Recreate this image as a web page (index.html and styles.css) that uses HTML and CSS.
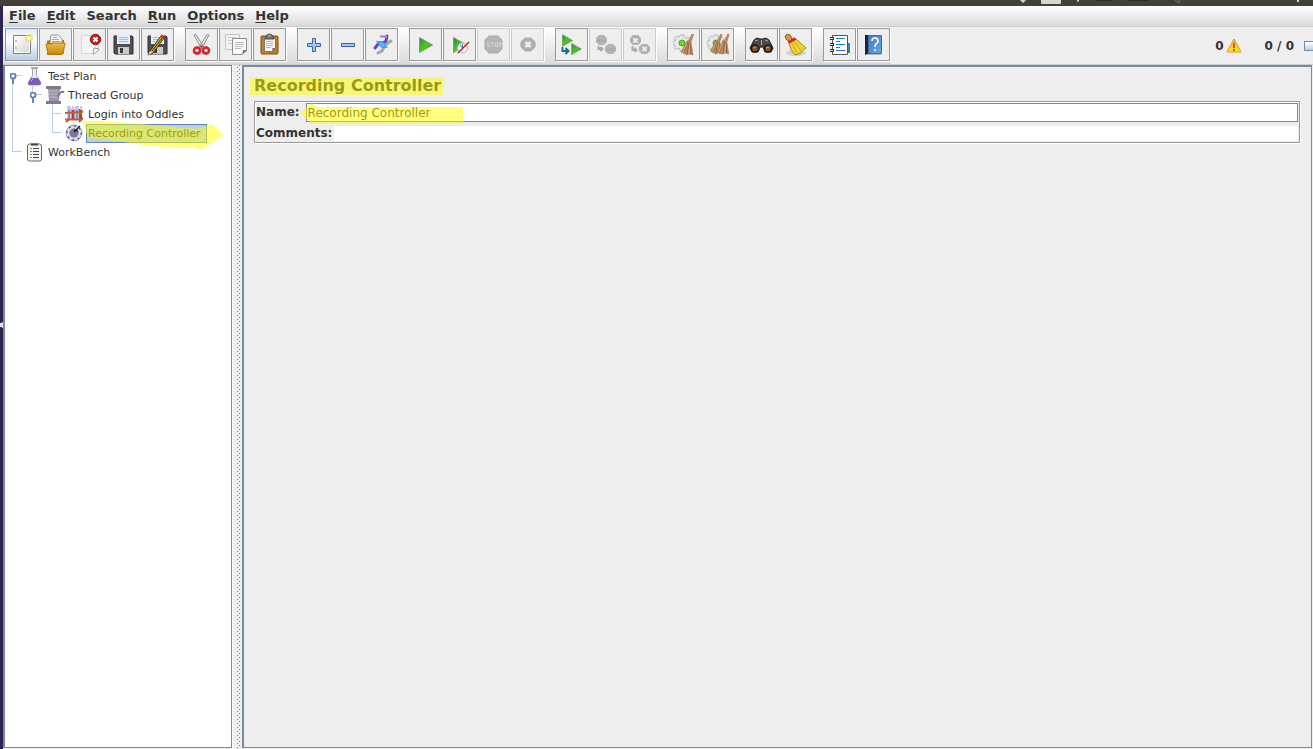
FILE: index.html
```html
<!DOCTYPE html>
<html lang="en">
<head>
<meta charset="utf-8">
<title>Test Plan</title>
<link rel="stylesheet" href="styles.css">
</head>
<body>
<svg class="defs" aria-hidden="true">
  <defs>
    <linearGradient id="green" x1="0" y1="0" x2="1" y2="1"><stop offset="0" stop-color="#2f7f4a"/><stop offset=".5" stop-color="#4fc81c"/><stop offset="1" stop-color="#2f8a12"/></linearGradient>
    <linearGradient id="folder" x1="0" y1="0" x2="0" y2="1"><stop offset="0" stop-color="#efbc43"/><stop offset="1" stop-color="#c98a0c"/></linearGradient>
    <linearGradient id="paper" x1="0" y1="0" x2="1" y2="1"><stop offset="0" stop-color="#ffffff"/><stop offset="1" stop-color="#d4d4d4"/></linearGradient>
    <linearGradient id="book" x1="0" y1="0" x2="1" y2="1"><stop offset="0" stop-color="#3f7cc8"/><stop offset="1" stop-color="#6aa5ea"/></linearGradient>
    <linearGradient id="warn" x1="0" y1="0" x2="0" y2="1"><stop offset="0" stop-color="#f7a84a"/><stop offset="1" stop-color="#fff200"/></linearGradient>
    <symbol id="floppy" viewBox="0 0 25 25">
      <path d="M3 4h18l1 1v17H4l-1-1z" fill="#4c5055" stroke="#2c2f33"/>
      <path d="M6 3h13v9H6z" fill="#e4eefa"/><path d="M8 5.500h9M8 7.500h9M8 9.500h9" stroke="#9dbbdc"/>
      <path d="M7 15h11v7H7z" fill="#c9c9c9"/><path d="M9 16h3v5H9z" fill="#383b3f"/>
    </symbol>
    <symbol id="play" viewBox="0 0 14 16"><path d="M.5.5l13 7.500-13 7.500z" fill="url(#green)" stroke="#7d9a72"/></symbol>
    <symbol id="broom" viewBox="0 0 14 22">
      <path d="M12 0l1.500.5L11 8l2 13-4-1-2 1-6-3 6-11 2-1z" fill="#b98d62" stroke="#a0764e" stroke-width=".6"/>
      <path d="M8 8L4 18M9 9L7 20M10 9l1 11" stroke="#7f5632" stroke-width=".8"/><path d="M7 9l-4 9M9.500 10L9 20" stroke="#dab68c" stroke-width=".8"/>
    </symbol>
    <symbol id="gear" viewBox="0 0 18 18">
      <path d="M7 1h4v2.500l2 .8 2-1.500 2 2-1.500 2 .8 1.200H18v4h-2l-.8 2 1.500 2-2 2-2-1.500-2 .8V17H7v-2l-2-.8-2 1.500-2-2L2.500 12 2 11H0V7h2l.8-1L1.500 4l2-2 2 1.500z" fill="#e5e9ea" stroke="#b2babc"/>
      <circle cx="9" cy="9" r="3" fill="#72d52c" stroke="#4ba51b"/>
    </symbol>
  </defs>
</svg>
<div class="app">
  <div class="topbar"><svg width="300" height="6" viewBox="0 0 300 6" aria-hidden="true"><path d="M9 0h6l-3 3zM66 0h2v1l-2 1zM286 0h2v2h-2z" fill="#d8d5cf"/><path d="M30 0h20v3q0 1-1 1H31q-1 0-1-1z" fill="#d8d5cf"/><path d="M85 0h17M117 0h20" stroke="#2c2b27" stroke-width="2"/><path d="M164 0l4 3 1-3" stroke="#77756e" fill="none"/></svg></div>
  <nav class="menubar" aria-label="Main menu">
    <button class="menu"><u>F</u>ile</button><button class="menu"><u>E</u>dit</button><button class="menu">Search</button><button class="menu"><u>R</u>un</button><button class="menu"><u>O</u>ptions</button><button class="menu"><u>H</u>elp</button>
  </nav>
  <header class="toolbar">
    <div class="group">
      <button class="tool hot" aria-label="New"><svg viewBox="0 0 25 25"><path d="M4.500 3.500h17v18h-17z" fill="url(#paper)" stroke="#7f7f7f"/><path d="M5.500 4.500h15v16h-15z" fill="none" stroke="#fff"/><path d="M7 8v2M7 15v2" stroke="#888"/><circle cx="20" cy="6" r="4" fill="#f0e050" opacity=".75"/><circle cx="20" cy="6" r="2" fill="#fffbd5"/></svg></button>
      <button class="tool" aria-label="Open"><svg viewBox="0 0 25 25"><path d="M4 9l3-1h14v13l-3 2H4z" fill="#b47a10"/><path d="M7 11l1-8h7l4 4v5z" fill="#f7f7f7" stroke="#999"/><path d="M10 5.500h4M9 7.500h7M9 9.500h8" stroke="#a8a8a8"/><path d="M3 12h5l2-1h12l-2 11H5z" fill="url(#folder)" stroke="#b37b0c"/></svg></button>
      <button class="tool" aria-label="Close"><svg viewBox="0 0 25 25"><path d="M4.500 3.500h17v13l-5 5h-12z" fill="#f6f6f6" stroke="#d6d6d6"/><path d="M16 22l1-6 5 1q-2 4-6 5z" fill="#fff" stroke="#999"/><circle cx="18.500" cy="7.500" r="5.200" fill="#c3231c" stroke="#8f1510"/><path d="M16.500 5.500l4 4m0-4l-4 4" stroke="#fff" stroke-width="2"/></svg></button>
      <button class="tool" aria-label="Save"><svg viewBox="0 0 25 25"><use href="#floppy"/></svg></button>
      <button class="tool" aria-label="Save as"><svg viewBox="0 0 25 25"><use href="#floppy"/><path d="M5 19L16 4l3 2L8 21l-5 2z" fill="#e7b42c" stroke="#3c2b08"/><path d="M7 19L17 6" stroke="#2a241a"/><path d="M15.500 4.500l1.500-2 3 2-1.500 2.500z" fill="#d3241d"/><path d="M5 19l-2 4 4-2z" fill="#f6e2b0"/></svg></button>
    </div>
    <div class="group">
      <button class="tool" aria-label="Cut"><svg viewBox="0 0 25 25"><ellipse cx="12" cy="21" rx="8" ry="2" fill="#ccc"/><path d="M5 3l2-.5 8 13-2 2zM20 3l-2-.5-8 13 2 2z" fill="#e4e6e3" stroke="#8d908c"/><circle cx="8" cy="18.500" r="3" fill="none" stroke="#d91e26" stroke-width="2.500"/><circle cx="17" cy="18.500" r="3" fill="none" stroke="#d91e26" stroke-width="2.500"/><circle cx="12.500" cy="14.500" r="1" fill="#6d1b1b"/></svg></button>
      <button class="tool" aria-label="Copy"><svg viewBox="0 0 25 25"><path d="M2.500 2.500h14v15h-14z" fill="#f2f2f2" stroke="#c2c2c2"/><path d="M5 5.500h8M5 8.500h4M5 11.500h4" stroke="#cbcbcb"/><path d="M9.500 6.500h14v12l-4 4h-10z" fill="#fafafa" stroke="#8d8d8d"/><path d="M12 10.500h9M12 12.500h9M12 14.500h8M12 16.500h6" stroke="#bcbcbc"/><path d="M19 22l1-4 4 0z" fill="#777"/></svg></button>
      <button class="tool" aria-label="Paste"><svg viewBox="0 0 25 25"><rect x="4" y="4" width="17" height="18" rx="1" fill="#bb8025" stroke="#805006"/><path d="M7.500 6.500h11v10l-3 3h-8z" fill="#f5f5f5" stroke="#777"/><path d="M9 9.500h7M9 11.500h7M9 13.500h7M9 15.500h5" stroke="#b5b5b5"/><path d="M15 20l.5-4h3.500z" fill="#777"/><path d="M8 7l1-3q3-4 7 0l1 3z" fill="#6c706a" stroke="#4c504c"/><path d="M11 4h3" stroke="#c7cac4"/></svg></button>
    </div>
    <div class="group">
      <button class="tool" aria-label="Expand all"><svg viewBox="0 0 25 25"><path d="M11.500 6.500h3v5h5v3h-5v5h-3v-5h-5v-3h5z" fill="#a6c7ec" stroke="#3465a4"/></svg></button>
      <button class="tool" aria-label="Collapse all"><svg viewBox="0 0 25 25"><path d="M6.500 11.500h13v3h-13z" fill="#a6c7ec" stroke="#3465a4"/></svg></button>
      <button class="tool" aria-label="Toggle"><svg viewBox="0 0 25 25"><path d="M22 9l-6 4-3 6-4 2" stroke="#a5a5a5" stroke-width="3" stroke-linecap="round" fill="none"/><path d="M18 4l-1 5-3 2M10 11l-4 5" stroke="#713ecb" stroke-width="3" stroke-linecap="round" fill="none"/><path d="M12 4.500h5" stroke="#a88bdf" stroke-width="2.500" stroke-linecap="round"/><path d="M9 10h4l4 5h-4z" fill="#71d5ff" stroke="#3ba8f5" stroke-width="2"/></svg></button>
    </div>
    <div class="group">
      <button class="tool" aria-label="Start"><svg viewBox="0 0 25 25"><use href="#play" x="6" y="5" width="14" height="16"/></svg></button>
      <button class="tool" aria-label="Start no pauses"><svg viewBox="0 0 25 25"><use href="#play" x="6" y="5" width="14" height="16"/><circle cx="15.500" cy="16" r="5" fill="#eaf2fa" stroke="#9bb7d2"/><path d="M13 13l2.500 3v-4" stroke="#567ca5" fill="none"/><path d="M11 21L22 10" stroke="#cf1515" stroke-width="1.500"/></svg></button>
      <button class="tool off" disabled aria-label="Stop"><svg viewBox="0 0 25 25"><path d="M8 4h9l4 4v9l-4 4H8l-4-4V8z" fill="#b5b5b5" stroke="#aaa"/><path d="M8.500 10.500h-2v2h2v2h-2M10 10.500h3M11.500 10v5M14.500 10.500h2v4h-2zM18.500 15v-4.500h1.500v2h-1" stroke="#d0d0d0" fill="none"/></svg></button>
      <button class="tool off" disabled aria-label="Shutdown"><svg viewBox="0 0 25 25"><path d="M10 6h6l4 4v5l-4 4h-6l-4-4v-5z" fill="#b0b0b0" stroke="#aaa"/><path d="M10.500 10l5 5m0-5l-5 5" stroke="#eee" stroke-width="2.500"/></svg></button>
    </div>
    <div class="group">
      <button class="tool" aria-label="Remote start all"><svg viewBox="0 0 25 25"><use href="#play" x="3" y="2" width="11" height="13"/><use href="#play" x="12" y="11" width="11" height="12"/><path d="M3.500 15v4h5m-2-3l3 3-3 3" stroke="#15728a" stroke-width="2" fill="none"/></svg></button>
      <button class="tool off" disabled aria-label="Remote stop all"><svg viewBox="0 0 25 25"><g fill="#b4b4b4"><path d="M6 3h5l3 3v4l-3 3H6l-3-3V6zM15 12h5l3 3v4l-3 3h-5l-3-3v-4z"/></g><path d="M5 8.500h7M14 17.500h7" stroke="#a2a2a2" stroke-width="2" stroke-dasharray="2 1"/><path d="M5.500 14v3h4m-2-2l2 2-2 2" stroke="#aaa" stroke-width="2" fill="none"/></svg></button>
      <button class="tool off" disabled aria-label="Remote shutdown all"><svg viewBox="0 0 25 25"><path d="M6 3h5l3 3v4l-3 3H6l-3-3V6zM15 12h5l3 3v4l-3 3h-5l-3-3v-4z" fill="#b0b0b0"/><path d="M6.500 6.500l4 4m0-4l-4 4M15.500 15l4 4m0-4l-4 4" stroke="#eee" stroke-width="1.800"/><path d="M5.500 14v4h4m-2-2l2 2-2 2" stroke="#aaa" stroke-width="2" fill="none"/></svg></button>
    </div>
    <div class="group">
      <button class="tool" aria-label="Clear"><svg viewBox="0 0 25 25"><use href="#gear" x="2" y="2" width="18" height="18"/><use href="#broom" x="9" y="2" width="14" height="22"/></svg></button>
      <button class="tool" aria-label="Clear all"><svg viewBox="0 0 25 25"><use href="#gear" x="2" y="2" width="18" height="18"/><use href="#broom" x="4" y="2" width="14" height="21"/><use href="#broom" x="11" y="2" width="14" height="21"/></svg></button>
    </div>
    <div class="group">
      <button class="tool" aria-label="Search"><svg viewBox="0 0 25 25"><path d="M5 8l3-2 3 1h3l3-1 3 2 4 8-2 4h-6l-2-5h-3l-2 5H3l-2-4z" fill="#494949" stroke="#202020"/><path d="M6 9l3-1M16 8l3 1M12.500 8v5" stroke="#aaa"/><circle cx="6" cy="16.500" r="3.600" fill="#8e5127" stroke="#171717" stroke-width="1.500"/><circle cx="19" cy="16.500" r="3.600" fill="#8e5127" stroke="#171717" stroke-width="1.500"/><path d="M4 16l3-1M17 16l3-1" stroke="#d39664"/></svg></button>
      <button class="tool" aria-label="Reset search"><svg viewBox="0 0 25 25"><ellipse cx="13" cy="21" rx="10" ry="3" fill="#d0d0d0"/><path d="M2 4q2-3 5-1l3 5-4 2-3-3z" fill="#d69847" stroke="#945e18"/><path d="M6 11l7-4 10 9q-4 2-5 5l-6 2q-5-5-6-12z" fill="#ecd438" stroke="#a98d08"/><path d="M9 12l5 9M12 10l6 9" stroke="#c8aa1c"/><path d="M5.500 10.500l7-4" stroke="#d72323" stroke-width="3"/></svg></button>
    </div>
    <div class="group">
      <button class="tool" aria-label="Function helper"><svg viewBox="0 0 25 25"><path d="M19 11h4v6h-4z" fill="#2b86e8"/><path d="M19 17h4v4h-4z" fill="#2b9a25"/><path d="M5.500 3.500h15v19h-15z" fill="#fdfdfd" stroke="#555"/><path d="M3 6.500h4M3 12.500h4M3 18.500h4" stroke="#333" stroke-width="3"/><path d="M2 6.500h4M2 12.500h4M2 18.500h4" stroke="#ddd"/><path d="M9 6.500h9M9 9.500h4M9 12.500h9M9 15.500h4M9 18.500h9" stroke="#1a75df"/></svg></button>
      <button class="tool" aria-label="Help"><svg viewBox="0 0 25 25"><path d="M4 3h4v20H4z" fill="#20262e"/><path d="M7.500 3.500h13v18h-13z" fill="url(#book)" stroke="#386fb0"/><path d="M5 22.500h15" stroke="#b8b8b8"/><path d="M11 9q0-3 3-3t3 3q0 2-2 3-1 1-1 3M14 17v2" stroke="#fff" stroke-width="1.700" fill="none"/></svg></button>
    </div>
    <div class="status">
      <span>0</span>
      <svg class="warning" viewBox="0 0 16 15" role="img" aria-label="Warnings"><path d="M8 1l7 13H1z" fill="url(#warn)" stroke="#ee8a28" stroke-linejoin="round"/><path d="M8 5v5M8 11v2" stroke="#d05a1a" stroke-width="2"/></svg>
      <span class="threads">0 / 0</span>
      <span class="lamp"></span>
    </div>
  </header>
  <main class="workspace">
    <aside class="treepane">
      <ul class="tree">
        <li class="node first">
          <div class="row"><button class="handle" aria-label="Collapse Test Plan"></button><svg class="icon" viewBox="0 0 20 20"><path d="M8.500 2.500v7L4 17q0 2 2 2h9q2 0 2-2l-4.500-7.500v-7" fill="#eceaf2" stroke="#a6a4b0"/><path d="M7 12h7l3 5q0 2-2 2H6q-2 0-2-2z" fill="#7f5db8"/><path d="M7 2h7" stroke="#aaa" stroke-width="2"/><path d="M7 15l2-2" stroke="#c5b3e6"/></svg><span class="label">Test Plan</span></div>
          <ul>
            <li class="node last">
              <div class="row"><button class="handle" aria-label="Collapse Thread Group"></button><svg class="icon" viewBox="0 0 20 20"><path d="M4 3h12l-1 13H5z" fill="#9c94a8"/><path d="M2 2.500h15M2 17.500h15" stroke="#817a8d" stroke-width="3"/><path d="M5 6h9M5 9h9M6 12h8" stroke="#c0b9cb"/><path d="M14 12q2-6 6-5" stroke="#82798f" stroke-width="2" fill="none"/></svg><span class="label">Thread Group</span></div>
              <ul>
                <li class="node">
                  <div class="row"><span></span><svg class="icon" viewBox="0 0 20 20"><path d="M5 2v14M13 2v14" stroke="#8a8fd8" stroke-width="3"/><path d="M9 5v11M16.500 5v10" stroke="#c62b4b" stroke-width="3"/><path d="M5 2v4M9 2v4M13 2v4M17 2v4" stroke="#c5c9dc" stroke-width="2"/><path d="M1 9l17-1M1 15.500h17M2 18l4-3M15 11l4-4M15 18l4-4" stroke="#b5652c" stroke-width="1.800"/></svg><span class="label">Login into Oddles</span></div>
                </li>
                <li class="node last">
                  <div class="row"><span></span><svg class="icon" viewBox="0 0 20 20"><circle cx="10" cy="10" r="8" fill="#dcd9e5" stroke="#a39fb4"/><circle cx="10" cy="10" r="7" fill="none" stroke="#494158" stroke-width="1.500" stroke-dasharray="1.500 4"/><circle cx="10" cy="10" r="4.500" fill="#7f739d"/><path d="M10 9l6-6M10 7l4 1" stroke="#282333" stroke-width="1.500"/></svg><span class="label selected">Recording Controller</span>
                  <svg class="marker" viewBox="0 0 142 32" aria-hidden="true"><path d="M1 1L20 1 60 4 115 9 130 4 142 15 119 30 114 28 95 28 61 25 35 21 6 18z"/></svg></div>
                </li>
              </ul>
            </li>
          </ul>
        </li>
        <li class="node last">
          <div class="row"><span></span><svg class="icon" viewBox="0 0 20 20"><rect x="3.500" y="2" width="14" height="17" rx="2" fill="#f4f4f4" stroke="#666"/><path d="M7 2.500h7" stroke="#444" stroke-width="2"/><path d="M9 6.500h6M9 9.500h6M9 12.500h6M9 15.500h6" stroke="#444"/><path d="M6 6.500h2M6 9.500h2M6 12.500h2M6 15.500h2" stroke="#679a52"/></svg><span class="label">WorkBench</span></div>
        </li>
      </ul>
    </aside>
    <div class="splitter" role="separator"></div>
    <section class="editor">
      <h1 class="title">Recording Controller</h1>
      <form class="fields">
        <div class="field"><label for="name">Name:</label><input class="text boxed" id="name" type="text" value="Recording Controller"><svg class="namemark" viewBox="0 0 163 22" aria-hidden="true"><path d="M0 10L12 0 17 4H163V21H12z"/></svg></div>
        <div class="field"><label for="comments">Comments:</label><input class="text" id="comments" type="text"></div>
      </form>
    </section>
  </main>
  <svg class="launcher" viewBox="0 0 3 6" aria-hidden="true"><path d="M0 1h1l2-1v6l-2-1H0z" fill="#e4e2e8"/></svg>
</div>
</body>
</html>
```
FILE: styles.css
```css
* { box-sizing: border-box; }
body { margin: 0; font-family: "DejaVu Sans", sans-serif; color: #333; background: #eee; overflow: hidden; }
button, input { font: inherit; color: inherit; }
.defs { position: absolute; width: 0; height: 0; }
.app { position: relative; display: flex; flex-direction: column; height: 100vh; border-left: 3px solid #2b2350; }
.launcher { position: absolute; left: -3px; top: 43%; width: 3px; height: 6px; }
.topbar { height: 6px; flex: none; display: flex; justify-content: flex-end; background: #42403b; overflow: hidden; margin-left: -3px; padding-right: 2px; }

.menubar { flex: none; display: flex; gap: 11px; height: 21px; padding-left: 6px; align-items: center; background: linear-gradient(#fff, #dadada); border-bottom: 1px solid #ccc; }
.menu { border: 0; padding: 0; background: none; font-size: 13px; line-height: 16px; font-weight: bold; }
.menu u { text-underline-offset: 2px; }

.toolbar { flex: none; display: flex; align-items: flex-start; gap: 11px; height: 38px; padding: 1px 0 0 2px; background: linear-gradient(#fff, #dadada); border-bottom: 1px solid #ccc; }
.group { display: flex; gap: 1px; }
.tool { width: 33px; height: 33px; padding: 3px; border: 1px solid #999; outline: 0; box-shadow: 1px 1px #fff; background: #eee; }
.tool svg { display: block; width: 25px; height: 25px; }
.tool.hot { background: linear-gradient(#dfe9f4, #fff 35%, #b8cfe5); border-color: #8397ad; }
.tool.off { border-color: #ccc; }
.status { flex: 1; align-self: stretch; display: flex; justify-content: flex-end; align-items: center; margin: -1px 0 0 -10px; background: #eee; font-size: 12px; font-weight: bold; line-height: 16px; }
.warning { width: 16px; height: 15px; margin-left: 2px; }
.threads { margin: 0 10px 0 23px; }
.lamp { width: 9px; height: 10px; border: 1px solid #7a8a99; border-right: 0; background: linear-gradient(#fff, #b8cfe5); }

.workspace { flex: 1; min-height: 0; display: grid; grid-template-columns: 229px 10px 1fr; padding-bottom: 1px; }
.treepane { background: #fff; border: solid #7a8a99; border-width: 1px 1px 1px 2px; overflow: hidden; }
.tree, .tree ul { list-style: none; margin: 0; padding: 0; }
.tree ul { padding-left: 20px; }
.node { position: relative; }
.node::before { content: ""; position: absolute; left: 7px; top: 9px; width: 10px; border-top: 1px solid #b8cfe5; }
.node::after { content: ""; position: absolute; left: 7px; top: 0; bottom: 0; border-left: 1px solid #b8cfe5; }
.node.first::after { top: 9px; }
.node.last::after { bottom: auto; height: 9px; }
.row { position: relative; display: grid; grid-template-columns: 19px 20px auto; align-items: center; justify-content: start; height: 19px; }
.icon { width: 20px; height: 20px; }
.handle { position: relative; z-index: 1; width: 7px; height: 11px; margin: 5px 0 0 5px; padding: 0; border: 0; background: radial-gradient(circle at 3px 3px, #fff 1px, #6382bf 2px, #6382bf 3px, transparent 4px), linear-gradient(#6382bf, #6382bf) 2px 5px / 2px 6px no-repeat; }
.label { margin-left: 2px; padding: 0 2px 0 1px; border: 1px solid transparent; font-size: 11px; line-height: 17px; white-space: nowrap; }
.label.selected { padding-right: 5px; background: #b8cfe5; border-color: #6382bf; }
.marker { position: absolute; left: 37px; top: -3px; width: 142px; height: 32px; fill: #ff0; opacity: .5; pointer-events: none; }

.splitter { cursor: col-resize; background:
  linear-gradient(#fff, #fff) 0 0 / 1px 100% no-repeat,
  repeating-linear-gradient(#777d84 0 1px, transparent 1px 4px) 5px 2px / 1px 100% no-repeat,
  repeating-linear-gradient(#777d84 0 1px, transparent 1px 4px) 7px 0 / 1px 100% no-repeat,
  repeating-linear-gradient(#fff 0 1px, transparent 1px 4px) 4px 1px / 1px 100% no-repeat,
  repeating-linear-gradient(#fff 0 1px, transparent 1px 4px) 6px 3px / 1px 100% no-repeat, #eee; }

.editor { border: solid #7a8a99; border-width: 2px 1px 1px 2px; margin-right: 1px; padding: 10px 11px 0 10px; min-width: 0; }
.title { position: relative; width: max-content; margin: 0 0 6px; font-size: 16px; line-height: 18px; font-weight: bold; }
.title::after { content: ""; position: absolute; inset: 0 -2px 0 -4px; background: #ff0; opacity: .5; }
.fields { border: 1px solid #999; box-shadow: 1px 1px #fff, inset 1px 1px #fff; padding: 1px; display: grid; gap: 4px; font-size: 12px; }
.field { position: relative; display: flex; align-items: stretch; }
.field label { padding-right: 6px; font-weight: bold; line-height: 15px; align-self: center; }
.field + .field label { padding-right: 2px; }
.text { flex: 1; min-width: 0; border: 0; padding: 0 1px; height: 15px; outline: 0; background: #fff; font-size: 12px; }
.text.boxed { height: 19px; border: 1px solid #7a8a99; }
.namemark { position: absolute; left: 44px; top: 0; width: 163px; height: 22px; fill: #ff0; opacity: .5; pointer-events: none; }
```
